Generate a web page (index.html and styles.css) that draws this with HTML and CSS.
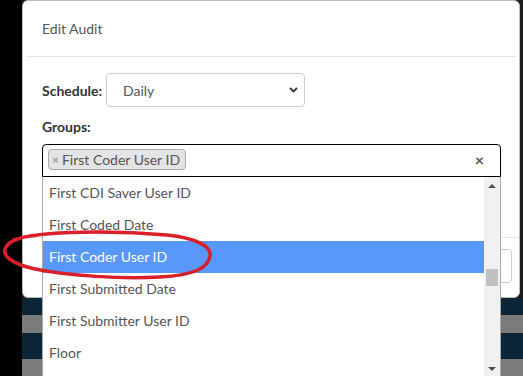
FILE: index.html
```html
<!DOCTYPE html>
<html lang="en">
<head>
    <meta charset="UTF-8">
    <meta name="viewport" content="width=device-width, initial-scale=1.0">
    <title>Edit Audit</title>
    <link rel="stylesheet" href="styles.css">
</head>
<body>

<div class="screen">
    <div class="page">
        <div class="modal">
            <div class="modal-header">Edit Audit</div>
            <div class="modal-body">
                <div class="field-row">
                    <label class="field-label schedule-label">Schedule:</label>
                    <div class="select">
                        <span>Daily</span>
                        <svg width="9" height="6" viewBox="0 0 9 6"><path d="M1 1 L4.5 4.5 L8 1" fill="none" stroke="#333" stroke-width="1.8"/></svg>
                    </div>
                </div>
                <label class="field-label groups-label">Groups:</label>
                <div class="select2">
                    <div class="selection">
                        <span class="tag"><span class="tag-remove">&times;</span>First Coder User ID</span>
                        <span class="clear">&times;</span>
                    </div>
                    <div class="dropdown">
                        <ul class="options">
                            <li>First CDI Saver User ID</li>
                            <li>First Coded Date</li>
                            <li class="highlighted">First Coder User ID</li>
                            <li>First Submitted Date</li>
                            <li>First Submitter User ID</li>
                            <li>Floor</li>
                        </ul>
                        <div class="scrollbar">
                            <div class="sb-btn"><span class="arrow-up"></span></div>
                            <div class="sb-track"><div class="sb-thumb"></div></div>
                            <div class="sb-btn"><span class="arrow-down"></span></div>
                        </div>
                    </div>
                </div>
            </div>
            <div class="modal-footer">
                <button class="btn">Save</button>
            </div>
        </div>
        <div class="stripe navy short"></div>
        <div class="stripe gray short"></div>
        <div class="stripe navy tall"></div>
        <div class="stripe gray"></div>
    </div>

    <!-- hand-drawn red marker round the chosen option -->
    <svg class="annotation" width="523" height="376" viewBox="0 0 523 376">
        <path d="M14 240 C 40 230, 120 231, 167 235 C 195 238, 212 246, 210 256 C 208 268, 195 275, 160 277 C 120 279, 70 276, 35 269 C 12 264, 3 256, 5 249 C 7 244, 11 241, 18 239"
              fill="none" stroke="#d91f2a" stroke-width="3.5" stroke-linecap="round"/>
    </svg>
</div>

</body>
</html>
```

FILE: styles.css
```css
body {
    margin: 0;
    background-color: #000;
    font-family: Lato, "Open Sans", sans-serif;
}
.screen {
    position: relative;
    width: 523px;
    height: 376px;
    overflow: hidden;
    display: flex;
    padding-left: 22px;
    box-sizing: border-box;
}
.page {
    flex: 1;
    display: flex;
    flex-direction: column;
    background-color: #1b1d20;
}
.modal {
    flex: none;
    width: 498px;
    height: 298px;
    box-sizing: border-box;
    background-color: white;
    border: 1px solid #b9b9b9;
    border-radius: 6px;
    display: flex;
    flex-direction: column;
}
.modal-header {
    height: 56px;
    box-sizing: border-box;
    margin: 0 3px;
    padding: 0 16px;
    border-bottom: 1px solid #e5e5e5;
    display: flex;
    align-items: center;
    font-size: 14px;
    color: #555;
}
.modal-body {
    height: 180px;
    box-sizing: border-box;
    padding: 16px 19px 0;
}
.field-row {
    display: flex;
    align-items: center;
    gap: 5px;
}
.field-label {
    font-size: 14px;
    font-weight: bold;
    color: #333;
}
.schedule-label {
    width: 59px;
}
.select {
    width: 199px;
    height: 34px;
    box-sizing: border-box;
    border: 1px solid #ccc;
    border-radius: 4px;
    padding: 0 6px 0 16px;
    display: flex;
    align-items: center;
    justify-content: space-between;
    font-size: 14px;
    color: #555;
}
.groups-label {
    display: block;
    margin-top: 11px;
    line-height: 18px;
}
.select2 {
    position: relative;
    width: 459px;
    margin-top: 8px;
}
.selection {
    height: 33px;
    box-sizing: border-box;
    border: 1px solid #000;
    border-radius: 4px 4px 0 0;
    padding: 4px 16px 0 5px;
    display: flex;
    align-items: flex-start;
    justify-content: space-between;
}
.tag {
    height: 21px;
    box-sizing: border-box;
    background-color: #e4e4e4;
    border: 1px solid #aaa;
    border-radius: 4px;
    padding: 0 5px 0 3px;
    display: flex;
    align-items: center;
    font-size: 14px;
    color: #555;
}
.tag-remove {
    color: #999;
    font-weight: bold;
    font-size: 12px;
    margin-right: 3px;
}
.clear {
    font-size: 16px;
    font-weight: bold;
    color: #555;
    line-height: 22px;
}
.dropdown {
    position: absolute;
    top: 33px;
    left: 0;
    z-index: 10;
    width: 459px;
    height: 201px;
    box-sizing: border-box;
    background-color: white;
    border: 1px solid #aaa;
    border-top: none;
    display: flex;
}
.options {
    flex: 1;
    list-style: none;
    margin: 0;
    padding: 0;
    overflow: hidden;
}
.options li {
    height: 32px;
    line-height: 32px;
    padding: 0 6px;
    font-size: 14px;
    color: #555;
}
.options li.highlighted {
    background-color: #5897fb;
    color: white;
}
.scrollbar {
    width: 16px;
    background-color: #f1f1f1;
    display: flex;
    flex-direction: column;
}
.sb-btn {
    height: 17px;
    display: flex;
    align-items: center;
    justify-content: center;
}
.sb-track {
    flex: 1;
}
.sb-thumb {
    margin: 75px 2px 0;
    height: 17px;
    background-color: #c1c1c1;
}
.arrow-up {
    border-left: 4px solid transparent;
    border-right: 4px solid transparent;
    border-bottom: 4px solid #505050;
}
.arrow-down {
    border-left: 4px solid transparent;
    border-right: 4px solid transparent;
    border-top: 4px solid #505050;
}
.modal-footer {
    flex: 1;
    border-top: 1px solid #e5e5e5;
    display: flex;
    justify-content: flex-end;
    align-items: flex-start;
    padding: 11px 7px 0;
}
.btn {
    height: 34px;
    padding: 0 14px;
    background-color: white;
    border: 1px solid #ccc;
    border-radius: 4px;
    font-family: Lato, sans-serif;
    font-size: 13px;
    color: #333;
}
.stripe {
    flex: none;
}
.stripe.navy {
    background-color: #0c2637;
}
.stripe.gray {
    flex: 1;
    background-color: #7b7b7b;
}
.stripe.short {
    height: 17px;
}
.stripe.tall {
    height: 26px;
}
.annotation {
    position: absolute;
    top: 0;
    left: 0;
    z-index: 20;
    pointer-events: none;
}
```
